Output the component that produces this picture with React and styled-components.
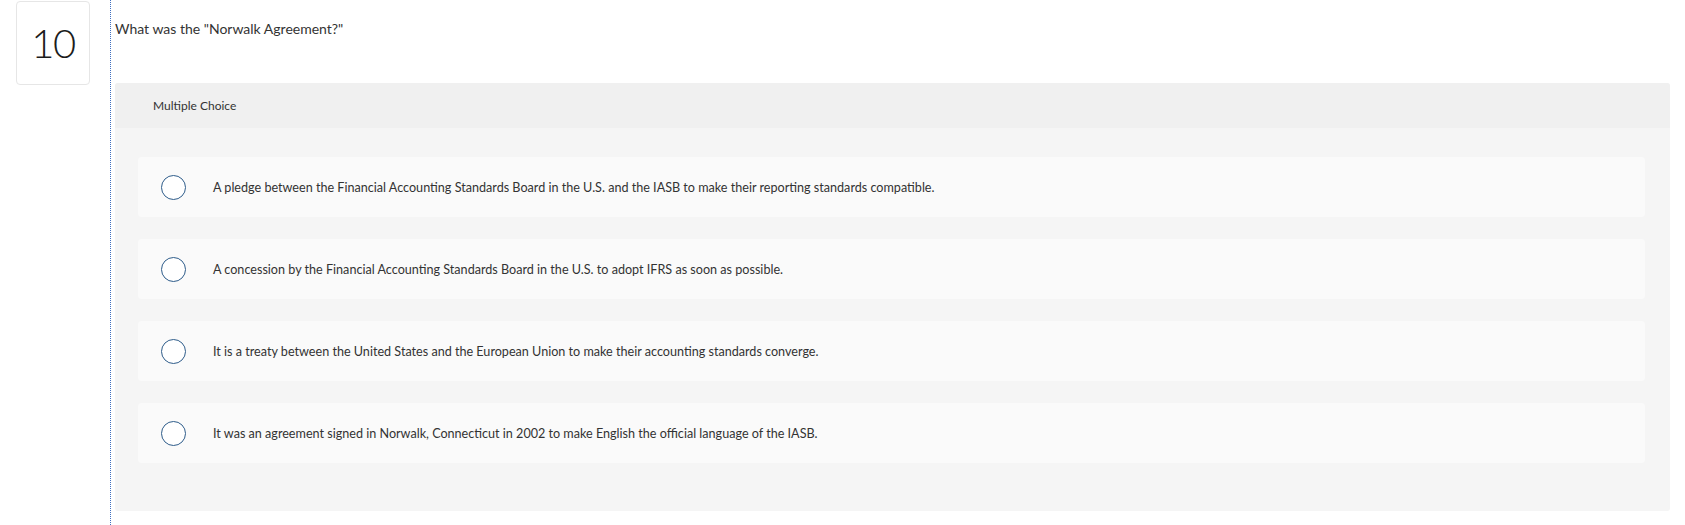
import React from 'react'
import styled, { createGlobalStyle } from 'styled-components'

const GlobalStyle = createGlobalStyle`
  body {
    margin: 0;
    background: #ffffff;
    font-family: Lato, "Liberation Sans", sans-serif;
  }
`

const Page = styled.div`
  display: flex;
  align-items: stretch;
  min-height: 525px;
`

const Aside = styled.div`
  width: 110px;
  padding: 1px 0 0 16px;
  box-sizing: border-box;
`

const NumberBox = styled.div`
  width: 74px;
  height: 84px;
  box-sizing: border-box;
  border: 1px solid #e6e6e6;
  border-radius: 4px;
  display: flex;
  align-items: center;
  justify-content: center;
  font-size: 40px;
  font-weight: 300;
  color: #1c1c1c;
  letter-spacing: -1.5px;
`

const Main = styled.div`
  flex: 1;
  border-left: 1px dotted #3f6fc0;
  padding: 0 15px 0 4px;
`

const Question = styled.div`
  font-size: 14px;
  color: #333;
  padding-top: 20px;
  height: 83px;
  box-sizing: border-box;
`

const Panel = styled.div`
  background: #f5f5f5;
  border-radius: 3px;
  padding-bottom: 48px;
`

const PanelHeader = styled.div`
  background: #f0f0f0;
  height: 45px;
  display: flex;
  align-items: center;
  padding-left: 38px;
  font-size: 12px;
  color: #333;
  border-radius: 3px 3px 0 0;
`

const Choices = styled.div`
  display: flex;
  flex-direction: column;
  gap: 22px;
  padding: 29px 25px 0 23px;
`

const Choice = styled.label`
  display: flex;
  align-items: center;
  height: 60px;
  background: #fafafa;
  border-radius: 4px;
  padding-left: 23px;
  font-size: 12.6px;
  color: #333;
  cursor: pointer;
`

const Radio = styled.span`
  width: 25px;
  height: 25px;
  box-sizing: border-box;
  border: 1.5px solid #2e5c8a;
  border-radius: 50%;
  background: #fff;
  margin-right: 27px;
  flex-shrink: 0;
`

const choices = [
  'A pledge between the Financial Accounting Standards Board in the U.S. and the IASB to make their reporting standards compatible.',
  'A concession by the Financial Accounting Standards Board in the U.S. to adopt IFRS as soon as possible.',
  'It is a treaty between the United States and the European Union to make their accounting standards converge.',
  'It was an agreement signed in Norwalk, Connecticut in 2002 to make English the official language of the IASB.',
]

export default function App() {
  return (
    <>
      <GlobalStyle />
      <Page>
        <Aside>
          <NumberBox>10</NumberBox>
        </Aside>
        <Main>
          <Question>What was the "Norwalk Agreement?"</Question>
          <Panel>
            <PanelHeader>Multiple Choice</PanelHeader>
            <Choices>
              {choices.map((c, i) => (
                <Choice key={i}>
                  <Radio />
                  <span>{c}</span>
                </Choice>
              ))}
            </Choices>
          </Panel>
        </Main>
      </Page>
    </>
  )
}
